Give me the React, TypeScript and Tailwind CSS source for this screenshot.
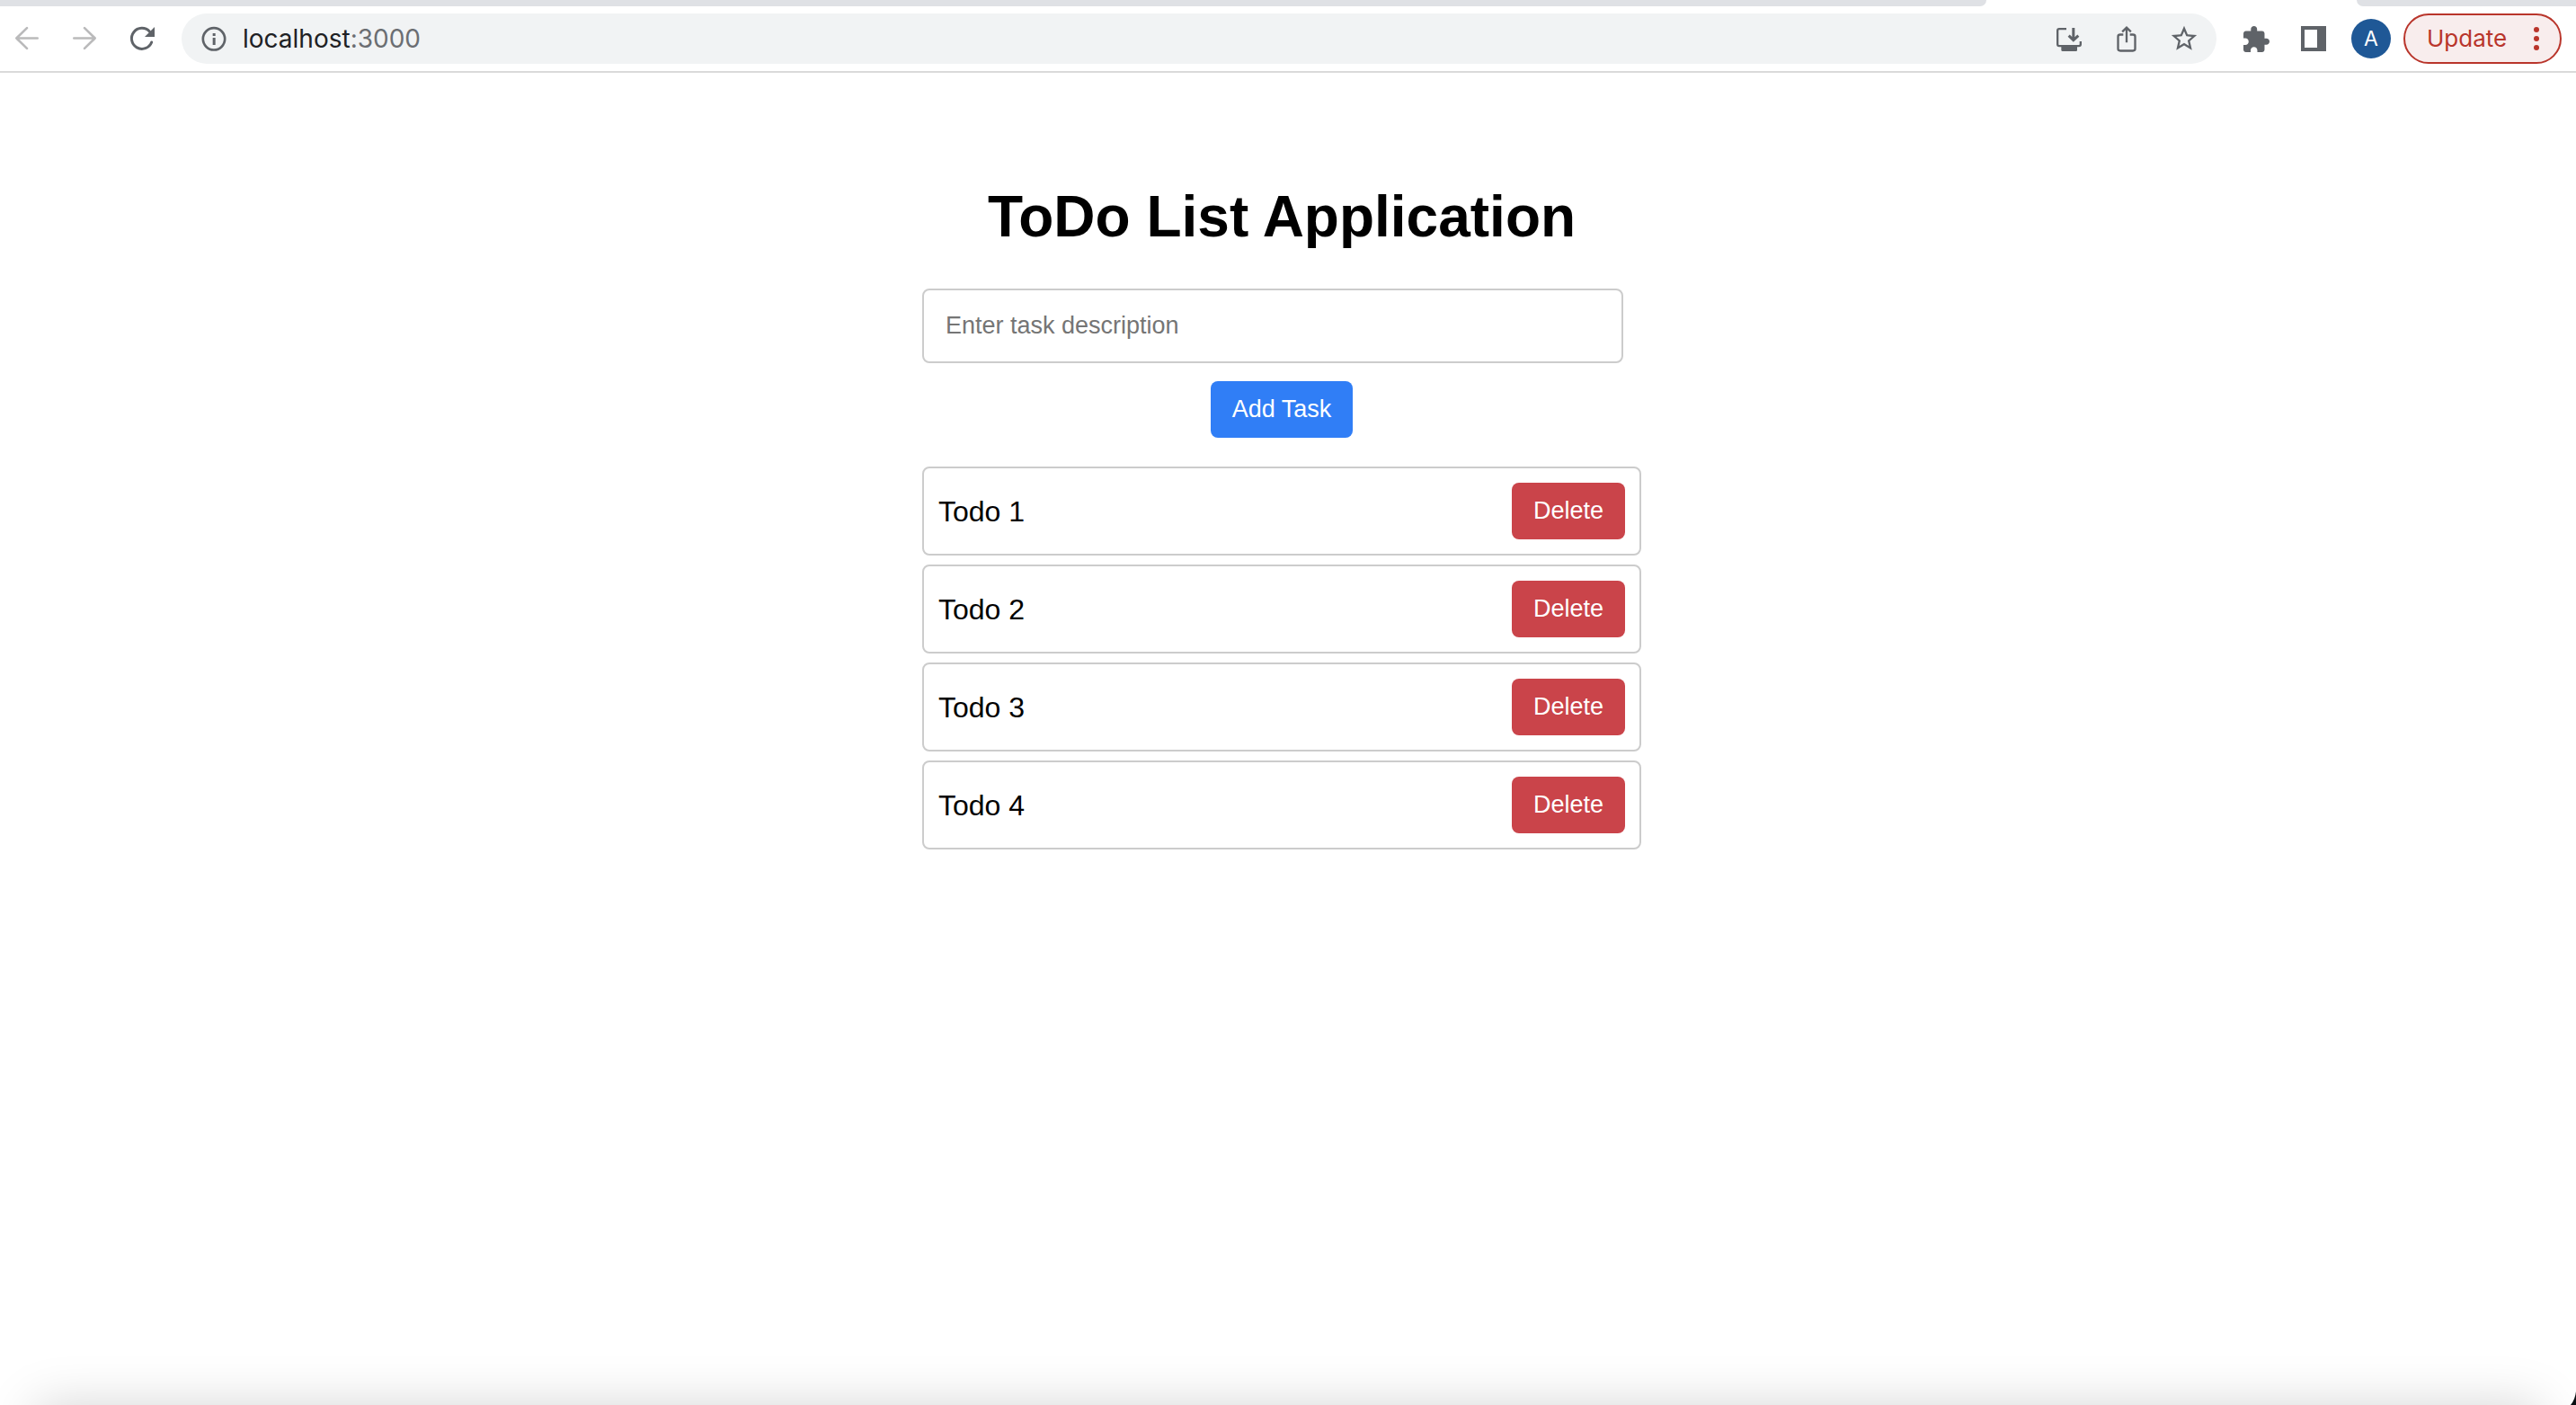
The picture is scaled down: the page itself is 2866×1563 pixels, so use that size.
import { useState } from "react";
import type { FormEvent, ReactNode } from "react";

function ToolButton({ label, children }: { label: string; children: ReactNode }) {
  return (
    <button type="button" aria-label={label} className="flex h-14 w-[60px] shrink-0 items-center justify-center">
      {children}
    </button>
  );
}

function BackIcon() {
  return (
    <svg viewBox="48 84 84 90" className="h-[30px] w-[28px]" fill="none" stroke="#bababb" strokeWidth="8" strokeLinecap="round" strokeLinejoin="round">
      <path d="M125 127.500H55M90 93.500L55 127.500L90 161.500" />
    </svg>
  );
}

function ForwardIcon() {
  return (
    <svg viewBox="240 84 84 90" className="h-[30px] w-[28px]" fill="none" stroke="#bababb" strokeWidth="8" strokeLinecap="round" strokeLinejoin="round">
      <path d="M247 127.500H317M282 93.500L317 127.500L282 161.500" />
    </svg>
  );
}

function ReloadIcon() {
  return (
    <svg viewBox="432 84 84 90" className="h-[30px] w-[28px]">
      <path d="M506 141A34.500 34.500 0 1 1 499 105" fill="none" stroke="#5f6368" strokeWidth="9" strokeLinecap="round" />
      <path d="M516 90V123H483Z" fill="#5f6368" />
    </svg>
  );
}

function InfoIcon() {
  return (
    <svg viewBox="670 84 90 90" className="size-[30px]">
      <circle cx="715" cy="130" r="36.500" fill="none" stroke="#5f6368" strokeWidth="8" />
      <path d="M711 111h9v9h-9zM711 126h9v24h-9z" fill="#5f6368" />
    </svg>
  );
}

function InstallIcon() {
  return (
    <svg viewBox="321 84 90 90" className="size-[30px]" fill="none" stroke="#5f6368" strokeWidth="7">
      <path d="M357 96.500H333Q327.500 96.500 327.500 102V148Q327.500 153.500 333 153.500H399Q404.500 153.500 404.500 148V138" />
      <path d="M340 153h53v14q0 4-4 4h-45q-4 0-4-4z" fill="#5f6368" stroke="none" />
      <path d="M380.500 93V132M365 119L380.500 134L397 119" strokeWidth="9" />
    </svg>
  );
}

function ShareIcon() {
  return (
    <svg viewBox="513 84 90 90" className="size-[30px]" fill="none" stroke="#5f6368" strokeWidth="7">
      <path d="M547 115.500H537Q529.500 115.500 529.500 122V163Q529.500 169.500 537 169.500H579Q586.500 169.500 586.500 163V122Q586.500 115.500 579 115.500H569" />
      <path d="M558 93V142M543.500 106L558 92L572.500 106" />
    </svg>
  );
}

function StarIcon() {
  return (
    <svg viewBox="0 0 24 24" className="size-[34px]" fill="#5f6368">
      <path d="M22 9.240l-7.190-.620L12 2 9.190 8.630 2 9.240l5.460 4.730L5.820 21 12 17.270 18.180 21l-1.630-7.030L22 9.240zM12 15.400l-3.760 2.270 1-4.280-3.320-2.880 4.380-.380L12 6.100l1.710 4.040 4.380.380-3.320 2.880 1 4.280L12 15.400z" />
    </svg>
  );
}

function PuzzleIcon() {
  return (
    <svg viewBox="2 1 21 21" className="size-[29px]" fill="#5f6368">
      <path d="M20.500 11H19V7c0-1.100-.900-2-2-2h-4V3.500C13 2.120 11.880 1 10.500 1S8 2.120 8 3.500V5H4c-1.100 0-1.990.900-1.990 2v3.800H3.500c1.490 0 2.700 1.210 2.700 2.700s-1.210 2.700-2.700 2.700H2V20c0 1.100.900 2 2 2h3.800v-1.500c0-1.490 1.210-2.700 2.700-2.700 1.490 0 2.700 1.210 2.700 2.700V22H17c1.100 0 2-.900 2-2v-4h1.500c1.380 0 2.500-1.120 2.500-2.500S21.880 11 20.500 11z" />
    </svg>
  );
}

function SidePanelIcon() {
  return (
    <svg viewBox="0 0 28 28" className="size-[28px]">
      <path d="M0 0H28V28H0ZM4 4V24H18V4Z" fill="#5f6368" fillRule="evenodd" />
    </svg>
  );
}

function DotsIcon() {
  return (
    <svg viewBox="0 0 6 26" className="h-[26px] w-[6px]" fill="#b9352b">
      <circle cx="3" cy="3" r="3" />
      <circle cx="3" cy="13" r="3" />
      <circle cx="3" cy="23" r="3" />
    </svg>
  );
}

function BrowserBar() {
  return (
    <header className="border-b-2 border-[#dadada] font-['Inter','Liberation_Sans',sans-serif]">
      <div className="flex h-[7px]">
        <div className="flex-1 rounded-br-[28px] bg-[#dfe1e5]" />
        <div className="w-[412px]" />
        <div className="w-[244px] rounded-bl-[28px] bg-[#dfe1e5]" />
      </div>
      <div className="flex h-[72px] items-center pr-4">
        <nav aria-label="History" className="flex gap-1">
          <ToolButton label="Back"><BackIcon /></ToolButton>
          <ToolButton label="Forward"><ForwardIcon /></ToolButton>
          <ToolButton label="Reload"><ReloadIcon /></ToolButton>
        </nav>
        <div className="ml-[14px] flex h-14 flex-1 items-center rounded-full bg-[#f1f3f4] px-[6px]">
          <ToolButton label="Site information"><InfoIcon /></ToolButton>
          <p className="flex-1 pl-[2px] text-[28px] leading-8 text-[#202124]">
            localhost<span className="text-[#6b6e72]">:3000</span>
          </p>
          <div className="flex gap-1">
            <ToolButton label="Install"><InstallIcon /></ToolButton>
            <ToolButton label="Share"><ShareIcon /></ToolButton>
            <ToolButton label="Bookmark"><StarIcon /></ToolButton>
          </div>
        </div>
        <div className="ml-[14px] flex gap-1">
          <ToolButton label="Extensions"><PuzzleIcon /></ToolButton>
          <ToolButton label="Side panel"><SidePanelIcon /></ToolButton>
        </div>
        <button type="button" className="ml-3 flex size-11 items-center justify-center rounded-full bg-[#1f5896] text-[23px] leading-8 text-white">
          A
        </button>
        <button type="button" className="ml-[14px] flex h-14 w-[176px] items-center justify-between rounded-full border-2 border-[#b9352b] bg-[#f8eded] pr-[23px] pl-6 text-[26px] leading-8 text-[#b9352b]">
          Update
          <DotsIcon />
        </button>
      </div>
    </header>
  );
}

type Task = { id: number; title: string };

const initialTasks: Task[] = [
  { id: 1, title: "Todo 1" },
  { id: 2, title: "Todo 2" },
  { id: 3, title: "Todo 3" },
  { id: 4, title: "Todo 4" },
];

export default function App() {
  const [tasks, setTasks] = useState<Task[]>(initialTasks);
  const [draft, setDraft] = useState("");

  const addTask = (event: FormEvent) => {
    event.preventDefault();
    const title = draft.trim();
    if (!title) return;
    setTasks([...tasks, { id: Date.now(), title }]);
    setDraft("");
  };

  return (
    <div className="relative flex min-h-screen flex-col overflow-hidden bg-white">
      <BrowserBar />
      <main className="flex flex-1 justify-center pt-[124px] pr-[14px] font-['Liberation_Sans',Arial,sans-serif] text-black">
        <div className="w-full max-w-[800px]">
          <h1 className="text-center text-[64px] leading-[72px] font-bold">ToDo List Application</h1>
          <form onSubmit={addTask} className="mt-11 flex flex-col items-center gap-5">
            <input
              type="text"
              aria-label="Task description"
              placeholder="Enter task description"
              value={draft}
              onChange={(event) => setDraft(event.target.value)}
              className="mr-5 h-[83px] w-[780px] max-w-full rounded-lg border-2 border-[#ccc] px-6 text-[27px] leading-[31px] placeholder:text-[#757575]"
            />
            <button type="submit" className="rounded-lg bg-[#307ef6] px-6 py-4 text-[27px] leading-[31px] text-white">
              Add Task
            </button>
          </form>
          <ul className="mt-8 flex flex-col gap-[10px]">
            {tasks.map((task) => (
              <li key={task.id} className="flex items-center justify-between rounded-lg border-2 border-[#ccc] p-4">
                <span className="text-[32px] leading-9">{task.title}</span>
                <button
                  type="button"
                  onClick={() => setTasks(tasks.filter((other) => other.id !== task.id))}
                  className="rounded-lg bg-[#ca444a] px-6 py-4 text-[27px] leading-[31px] text-white"
                >
                  Delete
                </button>
              </li>
            ))}
          </ul>
        </div>
      </main>
      <div className="pointer-events-none absolute inset-x-10 top-full h-20 shadow-[0_0_56px_rgba(0,0,0,0.17)]" />
      <svg viewBox="0 0 6 15" className="pointer-events-none absolute right-0 bottom-0 h-[15px] w-[6px]" fill="#0a0f12">
        <path d="M6 0V15H0Q5 9 6 0Z" />
      </svg>
    </div>
  );
}
